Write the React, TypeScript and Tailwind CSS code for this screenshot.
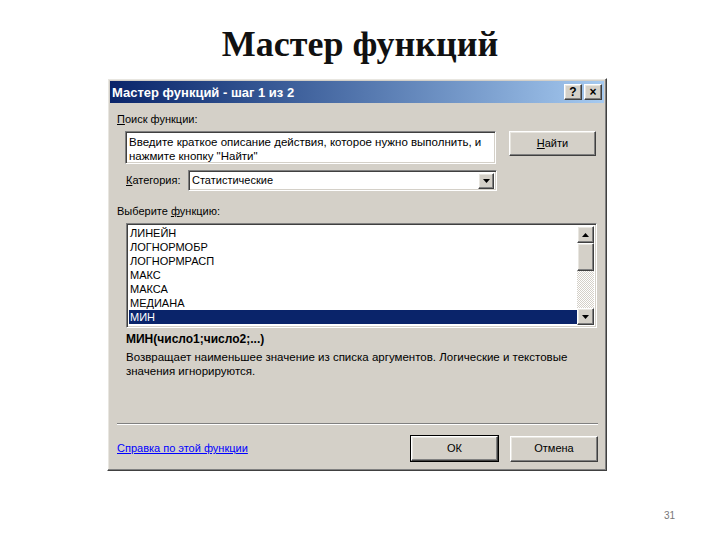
import { ReactNode } from 'react';

const raised =
  'border border-t-white border-l-white border-r-[#404040] border-b-[#404040] shadow-[inset_-1px_-1px_#808080,inset_1px_1px_#e8e6e0]';
const sunken =
  'border border-t-[#808080] border-l-[#808080] border-r-white border-b-white shadow-[inset_1px_1px_#404040,inset_-1px_-1px_#d4d0c8]';

const FUNCTIONS = ['ЛИНЕЙН', 'ЛОГНОРМОБР', 'ЛОГНОРМРАСП', 'МАКС', 'МАКСА', 'МЕДИАНА', 'МИН'];

function Arrow({ up }: { up?: boolean }) {
  return (
    <svg width="7" height="4" viewBox="0 0 7 4">
      <path d={up ? 'M3.5 0 L7 4 L0 4 Z' : 'M0 0 L7 0 L3.5 4 Z'} fill="#000" />
    </svg>
  );
}

function Button({ children, className = '', isDefault }: { children: ReactNode; className?: string; isDefault?: boolean }) {
  if (isDefault) {
    return (
      <div className={`border border-black ${className}`}>
        <div className={`${raised} h-full w-full flex items-center justify-center bg-[#d4d0c8]`}>{children}</div>
      </div>
    );
  }
  return <div className={`${raised} flex items-center justify-center bg-[#d4d0c8] ${className}`}>{children}</div>;
}

export default function App() {
  return (
    <div className="w-[720px] h-[540px] bg-white relative overflow-hidden font-['Liberation_Sans',Arial,sans-serif] text-[11px] text-black">
      {/* Slide heading */}
      <h1 className="text-center pt-[24px] h-[78px] font-['Liberation_Serif','Times_New_Roman',serif] font-bold text-[36px] leading-[40px] text-[#111]">
        Мастер функций
      </h1>

      {/* Dialog */}
      <div className={`ml-[107px] w-[500px] h-[393px] bg-[#d4d0c8] p-[1px] ${raised} flex flex-col`}>
        {/* Title bar */}
        <div className="h-[22px] mx-[1px] mt-[1px] flex items-center justify-between pl-[2px] pr-[2px] bg-gradient-to-r from-[#0a246a] to-[#a6caf0]">
          <span className="text-white font-bold text-[13px] leading-none">Мастер функций - шаг 1 из 2</span>
          <div className="flex gap-[2px]">
            <Button className="w-[18px] h-[16px] text-[12px] font-bold leading-none">?</Button>
            <Button className="w-[18px] h-[16px] text-[12px] font-bold leading-none">×</Button>
          </div>
        </div>

        {/* Body */}
        <div className="flex-1 flex flex-col pl-[8px] pr-[7px]">
          <div className="mt-[10px] leading-[13px]">
            <span className="underline">П</span>оиск функции:
          </div>

          <div className="mt-[5px] ml-[8px] flex gap-[13px] items-start">
            <div className={`${sunken} bg-white w-[371px] shrink-0 h-[33px] px-[3px] pt-[3px] leading-[14px] text-[11.5px]`}>
              Введите краткое описание действия, которое нужно выполнить, и
              <br />
              нажмите кнопку "Найти"
            </div>
            <Button className="w-[87px] h-[25px]">
              <span>
                <span className="underline">Н</span>айти
              </span>
            </Button>
          </div>

          <div className="mt-[6px] ml-[9px] flex items-center">
            <span className="w-[62px]">
              <span className="underline">К</span>атегория:
            </span>
            <div className={`${sunken} bg-white w-[309px] h-[21px] flex items-center justify-between pl-[3px] pr-[2px]`}>
              <span>Статистические</span>
              <Button className="w-[16px] h-[16px]">
                <Arrow />
              </Button>
            </div>
          </div>

          <div className="mt-[14px] leading-[13px]">
            Выберите <span className="underline">ф</span>ункцию:
          </div>

          <div className={`mt-[5px] ml-[9px] w-[471px] h-[105px] bg-white ${sunken} flex`}>
            <div className="flex-1 pt-[2px] pl-[2px]">
              {FUNCTIONS.map((f, i) => (
                <div
                  key={f}
                  className={`h-[14px] leading-[14px] pl-[1px] ${
                    i === FUNCTIONS.length - 1 ? 'bg-[#0a246a] text-white' : ''
                  }`}
                >
                  {f}
                </div>
              ))}
            </div>
            <div className="w-[17px] flex flex-col bg-[repeating-conic-gradient(#d4d0c8_0%_25%,#ffffff_0%_50%)] bg-[length:2px_2px] mt-[2px] mb-[2px] mr-[2px]">
              <Button className="h-[17px] w-[17px]">
                <Arrow up />
              </Button>
              <Button className="h-[28px] w-[17px]">{''}</Button>
              <div className="flex-1" />
              <Button className="h-[17px] w-[17px]">
                <Arrow />
              </Button>
            </div>
          </div>

          <div className="mt-[4px] ml-[9px] font-bold text-[12px] leading-[15px]">МИН(число1;число2;...)</div>
          <div className="mt-[3px] ml-[9px] leading-[14px] text-[11.5px]">
            Возвращает наименьшее значение из списка аргументов. Логические и текстовые
            <br />
            значения игнорируются.
          </div>

          <div className="flex-1" />

          <div className="h-[2px] border-t border-t-[#808080] border-b border-b-white" />

          <div className="mt-[10px] mb-[7px] flex items-center">
            <span className="text-[#0000ff] underline flex-1">Справка по этой функции</span>
            <Button isDefault className="w-[89px] h-[27px]">
              ОК
            </Button>
            <Button className="w-[88px] h-[26px] ml-[11px]">Отмена</Button>
          </div>
        </div>
      </div>

      <div className="absolute left-[664px] top-[508px] text-[10px] text-[#777]">31</div>
    </div>
  );
}
